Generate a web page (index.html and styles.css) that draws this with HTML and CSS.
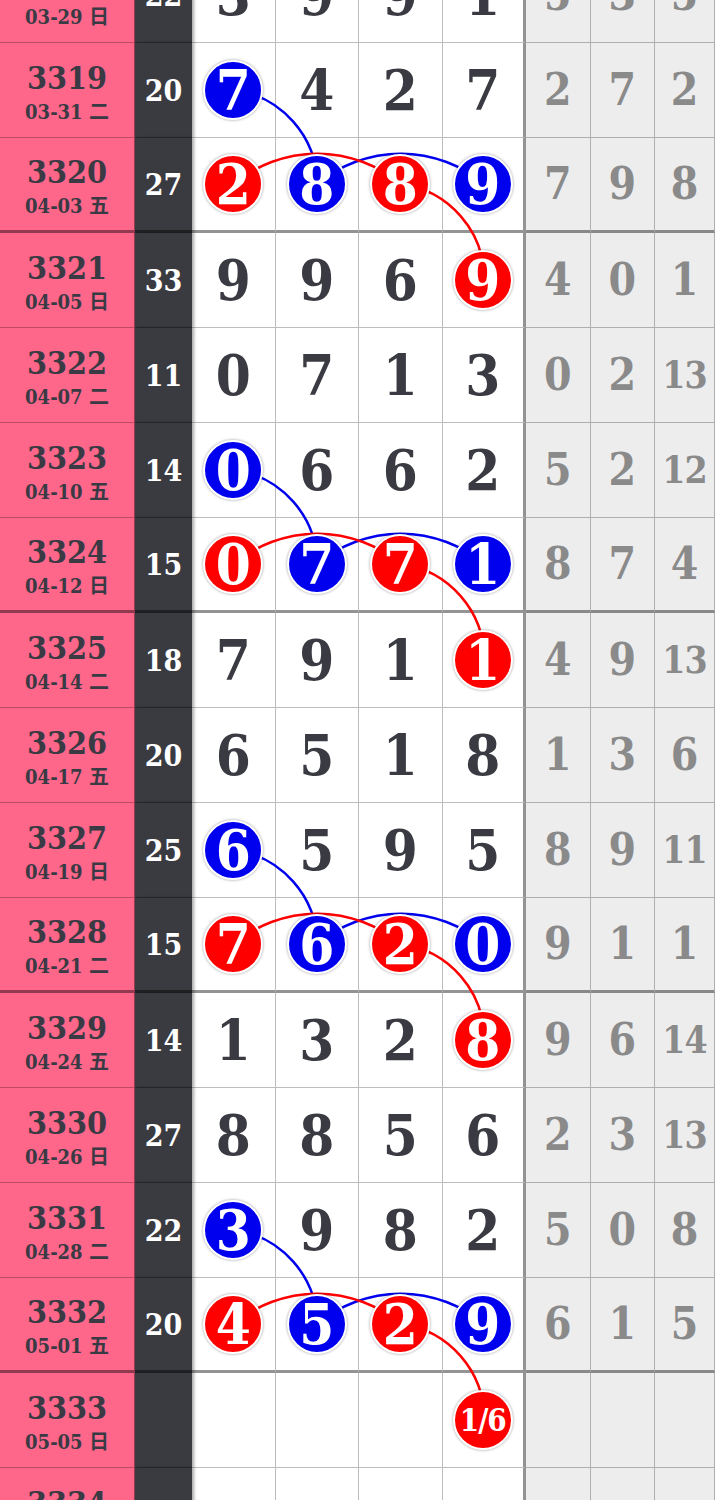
FILE: index.html
```html
<!DOCTYPE html>
<html lang="zh">
<head>
<meta charset="utf-8">
<title>走势图</title>
<link rel="stylesheet" href="styles.css">
</head>
<body>
<div class="sheet">
  <svg class="links" width="715" height="1615" viewBox="0 0 715 1615" aria-hidden="true">
    <g fill="none" stroke-width="2.5">
      <path stroke="#0000ee" d="M233.75 142 A96 96 0 0 1 317.25 236 M317.25 236 A130 130 0 0 1 484.25 236"/>
      <path stroke="#ff0000" d="M233.75 236 A130 130 0 0 1 400.75 236 M400.75 236 A96 96 0 0 1 484.25 332"/>
      <path stroke="#0000ee" d="M233.75 522 A96 96 0 0 1 317.25 616 M317.25 616 A130 130 0 0 1 484.25 616"/>
      <path stroke="#ff0000" d="M233.75 616 A130 130 0 0 1 400.75 616 M400.75 616 A96 96 0 0 1 484.25 712"/>
      <path stroke="#0000ee" d="M233.75 902 A96 96 0 0 1 317.25 996 M317.25 996 A130 130 0 0 1 484.25 996"/>
      <path stroke="#ff0000" d="M233.75 996 A130 130 0 0 1 400.75 996 M400.75 996 A96 96 0 0 1 484.25 1092"/>
      <path stroke="#0000ee" d="M233.75 1282 A96 96 0 0 1 317.25 1376 M317.25 1376 A130 130 0 0 1 484.25 1376"/>
      <path stroke="#ff0000" d="M233.75 1376 A130 130 0 0 1 400.75 1376 M400.75 1376 A96 96 0 0 1 484.25 1472"/>
    </g>
  </svg>

  <div class="row">
    <div class="id"><b>3318</b><i>03-29 日</i></div><div class="sum">22</div>
    <div class="n">3</div><div class="n">9</div><div class="n">9</div><div class="n">1</div>
    <div class="g">5</div><div class="g">3</div><div class="g">5</div>
  </div>
  <div class="row">
    <div class="id"><b>3319</b><i>03-31 二</i></div><div class="sum">20</div>
    <div class="n"><span class="ball b">7</span></div><div class="n">4</div><div class="n">2</div><div class="n">7</div>
    <div class="g">2</div><div class="g">7</div><div class="g">2</div>
  </div>
  <div class="row end">
    <div class="id"><b>3320</b><i>04-03 五</i></div><div class="sum">27</div>
    <div class="n"><span class="ball r">2</span></div><div class="n"><span class="ball b">8</span></div><div class="n"><span class="ball r">8</span></div><div class="n"><span class="ball b">9</span></div>
    <div class="g">7</div><div class="g">9</div><div class="g">8</div>
  </div>
  <div class="row">
    <div class="id"><b>3321</b><i>04-05 日</i></div><div class="sum">33</div>
    <div class="n">9</div><div class="n">9</div><div class="n">6</div><div class="n"><span class="ball r">9</span></div>
    <div class="g">4</div><div class="g">0</div><div class="g">1</div>
  </div>
  <div class="row">
    <div class="id"><b>3322</b><i>04-07 二</i></div><div class="sum">11</div>
    <div class="n">0</div><div class="n">7</div><div class="n">1</div><div class="n">3</div>
    <div class="g">0</div><div class="g">2</div><div class="g two">13</div>
  </div>
  <div class="row">
    <div class="id"><b>3323</b><i>04-10 五</i></div><div class="sum">14</div>
    <div class="n"><span class="ball b">0</span></div><div class="n">6</div><div class="n">6</div><div class="n">2</div>
    <div class="g">5</div><div class="g">2</div><div class="g two">12</div>
  </div>
  <div class="row end">
    <div class="id"><b>3324</b><i>04-12 日</i></div><div class="sum">15</div>
    <div class="n"><span class="ball r">0</span></div><div class="n"><span class="ball b">7</span></div><div class="n"><span class="ball r">7</span></div><div class="n"><span class="ball b">1</span></div>
    <div class="g">8</div><div class="g">7</div><div class="g">4</div>
  </div>
  <div class="row">
    <div class="id"><b>3325</b><i>04-14 二</i></div><div class="sum">18</div>
    <div class="n">7</div><div class="n">9</div><div class="n">1</div><div class="n"><span class="ball r">1</span></div>
    <div class="g">4</div><div class="g">9</div><div class="g two">13</div>
  </div>
  <div class="row">
    <div class="id"><b>3326</b><i>04-17 五</i></div><div class="sum">20</div>
    <div class="n">6</div><div class="n">5</div><div class="n">1</div><div class="n">8</div>
    <div class="g">1</div><div class="g">3</div><div class="g">6</div>
  </div>
  <div class="row">
    <div class="id"><b>3327</b><i>04-19 日</i></div><div class="sum">25</div>
    <div class="n"><span class="ball b">6</span></div><div class="n">5</div><div class="n">9</div><div class="n">5</div>
    <div class="g">8</div><div class="g">9</div><div class="g two">11</div>
  </div>
  <div class="row end">
    <div class="id"><b>3328</b><i>04-21 二</i></div><div class="sum">15</div>
    <div class="n"><span class="ball r">7</span></div><div class="n"><span class="ball b">6</span></div><div class="n"><span class="ball r">2</span></div><div class="n"><span class="ball b">0</span></div>
    <div class="g">9</div><div class="g">1</div><div class="g">1</div>
  </div>
  <div class="row">
    <div class="id"><b>3329</b><i>04-24 五</i></div><div class="sum">14</div>
    <div class="n">1</div><div class="n">3</div><div class="n">2</div><div class="n"><span class="ball r">8</span></div>
    <div class="g">9</div><div class="g">6</div><div class="g two">14</div>
  </div>
  <div class="row">
    <div class="id"><b>3330</b><i>04-26 日</i></div><div class="sum">27</div>
    <div class="n">8</div><div class="n">8</div><div class="n">5</div><div class="n">6</div>
    <div class="g">2</div><div class="g">3</div><div class="g two">13</div>
  </div>
  <div class="row">
    <div class="id"><b>3331</b><i>04-28 二</i></div><div class="sum">22</div>
    <div class="n"><span class="ball b">3</span></div><div class="n">9</div><div class="n">8</div><div class="n">2</div>
    <div class="g">5</div><div class="g">0</div><div class="g">8</div>
  </div>
  <div class="row end">
    <div class="id"><b>3332</b><i>05-01 五</i></div><div class="sum">20</div>
    <div class="n"><span class="ball r">4</span></div><div class="n"><span class="ball b">5</span></div><div class="n"><span class="ball r">2</span></div><div class="n"><span class="ball b">9</span></div>
    <div class="g">6</div><div class="g">1</div><div class="g">5</div>
  </div>
  <div class="row">
    <div class="id"><b>3333</b><i>05-05 日</i></div><div class="sum"></div>
    <div class="n"></div><div class="n"></div><div class="n"></div><div class="n"><span class="ball r frac">1/6</span></div>
    <div class="g"></div><div class="g"></div><div class="g"></div>
  </div>
  <div class="row">
    <div class="id"><b>3334</b><i>05-07 二</i></div><div class="sum"></div>
    <div class="n"></div><div class="n"></div><div class="n"></div><div class="n"></div>
    <div class="g"></div><div class="g"></div><div class="g"></div>
  </div>
</div>
</body>
</html>
```

FILE: styles.css
```css
* {
  box-sizing: border-box;
  margin: 0;
  padding: 0;
}

html,
body {
  background: #ffffff;
}

body {
  width: 715px;
  height: 1500px;
  overflow: hidden;
  font-family: "DejaVu Serif Condensed", "DejaVu Serif", "Noto Sans CJK SC", serif;
  font-stretch: condensed;
}

.sheet {
  position: relative;
  margin-top: -52px;
  background: #ffffff;
}

.links {
  position: absolute;
  left: 0;
  top: 0;
  z-index: 1;
  pointer-events: none;
}

.row {
  display: grid;
  grid-template-columns: 135px 57px 83.5px 83.5px 83.5px 83.5px 64.5px 64.5px 1fr;
  height: 95px;
}

.row > div {
  display: flex;
  align-items: center;
  justify-content: center;
  border-bottom: 1px solid rgba(0, 0, 0, 0.26);
}

.row.end > div {
  border-bottom: 3px solid rgba(0, 0, 0, 0.42);
}

.id {
  flex-direction: column;
  padding-top: 4px;
  background: #fe668a;
  color: #3a3a44;
  border-right: 1px solid rgba(0, 0, 0, 0.4);
}

.id b {
  font-size: 32px;
  font-weight: 700;
  line-height: 36px;
}

.id i {
  margin-top: 4px;
  font-style: normal;
  font-size: 20px;
  font-weight: 700;
  line-height: 24px;
}

.sum {
  position: relative;
  z-index: 1;
  background: #3a3a41;
  color: #ffffff;
  font-size: 30px;
  font-weight: 700;
  box-shadow: 2px 0 3px rgba(0, 0, 0, 0.35);
}

.n {
  color: #3a3a42;
  font-size: 56px;
  font-weight: 700;
  line-height: 1;
  border-right: 1px solid rgba(0, 0, 0, 0.26);
}

.n:nth-child(6) {
  border-right: 3px solid rgba(0, 0, 0, 0.42);
}

.g {
  background: #ededed;
  color: #8a8a8a;
  font-size: 44px;
  font-weight: 700;
  line-height: 1;
  border-right: 1px solid rgba(0, 0, 0, 0.26);
}

.g.two {
  font-size: 37px;
  letter-spacing: -1px;
}

.ball {
  position: relative;
  z-index: 2;
  display: flex;
  align-items: center;
  justify-content: center;
  width: 60px;
  height: 60px;
  border-radius: 50%;
  border: 2.5px solid #ffffff;
  box-shadow: 0 0 3px rgba(0, 0, 0, 0.4);
  color: #ffffff;
  line-height: 1;
}

.ball.b {
  background: #0000ee;
}

.ball.r {
  background: #ff0000;
}

.ball.frac {
  font-size: 31px;
  letter-spacing: -1px;
}
```
